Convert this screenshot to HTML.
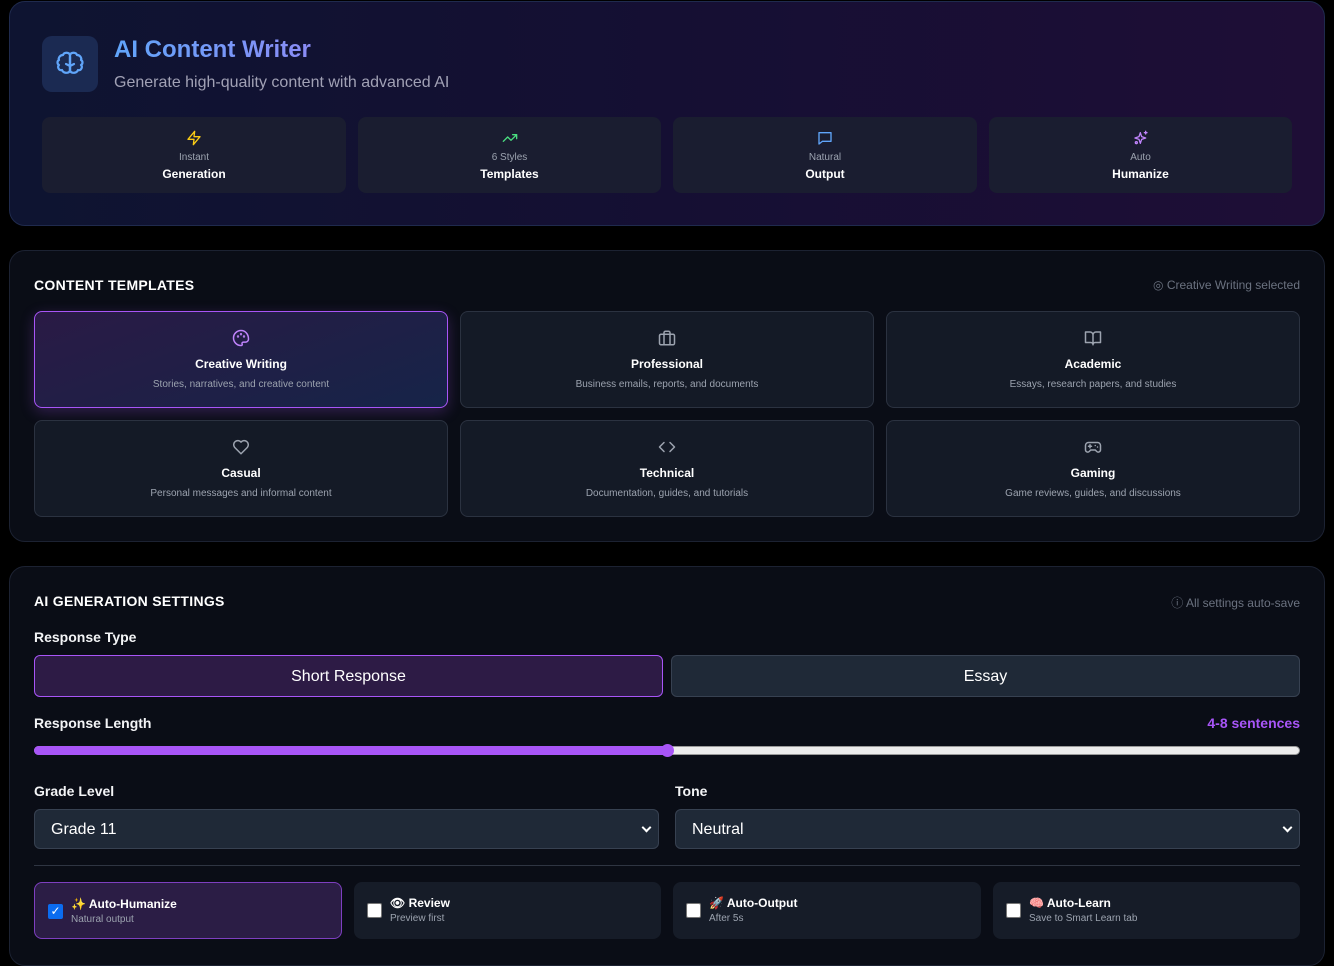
<!DOCTYPE html>
<html><head><meta charset="utf-8"><style>
*{box-sizing:border-box;margin:0;padding:0}
body{width:1334px;height:952px;overflow:hidden;background:#000;font-family:"Liberation Sans",sans-serif;color:#fff;position:relative}
.abs{position:absolute}
.card{position:absolute;border-radius:16px;border:1px solid #1e2538}
.hdr{left:9px;top:1px;width:1316px;height:225px;background:linear-gradient(90deg,#0e1431 0%,#150f33 50%,#1e0e36 100%);border-color:#1f2a4d}
.stat{position:absolute;top:117px;height:76px;background:#1a1d30;border-radius:8px;text-align:center}
.stat svg{display:block;margin:13px auto 0}
.stat .s{font-size:10px;color:#9ca3af;margin-top:6px}
.stat .b{font-size:12px;font-weight:bold;margin-top:4px}
.sec{background:#0a0d16;border-color:#1c2232}
.h{font-size:14px;font-weight:bold;letter-spacing:.3px}
.tile{position:absolute;width:414px;height:97px;background:#141a26;border:1px solid #2b3240;border-radius:8px;text-align:center}
.tile svg{display:block;margin:17px auto 0}
.tile .t{font-size:12px;font-weight:bold;margin-top:10px}
.tile .d{font-size:10px;color:#9ca3af;margin-top:8px}
.lbl{font-size:14px;font-weight:bold;color:#f3f4f6}
.btn{position:absolute;top:655px;height:42px;border-radius:6px;font-size:16px;text-align:center;line-height:42px}
.sel{position:absolute;top:809px;height:40px;background:#1f2937;border:1px solid #374151;border-radius:6px;font-size:16px;line-height:40px;padding-left:16px}
.sel:after{content:"";position:absolute;right:8px;top:14px;width:5px;height:5px;border-right:2px solid #fff;border-bottom:2px solid #fff;transform:rotate(45deg)}
.opt{position:absolute;top:882px;height:57px;border-radius:8px;background:#161c28}
.opt .cb{position:absolute;left:13px;top:21px;width:15px;height:15px;background:#fff;border-radius:2px;border:1px solid #777}
.opt .t{position:absolute;left:36px;top:14px;font-size:12px;font-weight:bold}
.opt .d{position:absolute;left:36px;top:31px;font-size:10px;color:#9ca3af}
</style></head><body>
<div class="card hdr"></div>
<div class="abs" style="left:42px;top:36px;width:56px;height:56px;border-radius:10px;background:#1b2a52">
<svg width="56" height="56" viewBox="0 0 56 56"><g fill="none" stroke="#60a5fa" stroke-width="2.2" stroke-linecap="round" stroke-linejoin="round"><path d="M28 19c-1-3-6-3-7 0-3 0-5 3-4 5-2 1-2 4 0 5-2 2 0 6 3 5 1 3 6 4 8 1z"/><path d="M28 19c1-3 6-3 7 0 3 0 5 3 4 5 2 1 2 4 0 5 2 2 0 6-3 5-1 3-6 4-8 1z"/><path d="M28 21v14M24 28l4 2 4-2"/></g></svg></div>
<div class="abs" style="left:114px;top:36px;font-size:24px;font-weight:bold;background:linear-gradient(90deg,#60a5fa,#8b8cf6);-webkit-background-clip:text;color:transparent">AI Content Writer</div>
<div class="abs" style="left:114px;top:74px;font-size:16px;color:#a1a1b5">Generate high-quality content with advanced AI</div>
<div class="stat" style="left:42px;width:304px"><svg width="16" height="16" viewBox="0 0 24 24" fill="none" stroke="#facc15" stroke-width="2" stroke-linejoin="round"><path d="M13 2L3 14h9l-1 8 10-12h-9z"/></svg><div class="s">Instant</div><div class="b">Generation</div></div>
<div class="stat" style="left:358px;width:303px"><svg width="16" height="16" viewBox="0 0 24 24" fill="none" stroke="#4ade80" stroke-width="2" stroke-linecap="round" stroke-linejoin="round"><path d="M22 7l-8.5 8.5-5-5L2 17M16 7h6v6"/></svg><div class="s">6 Styles</div><div class="b">Templates</div></div>
<div class="stat" style="left:673px;width:304px"><svg width="16" height="16" viewBox="0 0 24 24" fill="none" stroke="#60a5fa" stroke-width="2" stroke-linejoin="round"><path d="M3 4h18v13H8l-5 4z"/></svg><div class="s">Natural</div><div class="b">Output</div></div>
<div class="stat" style="left:989px;width:303px"><svg width="16" height="16" viewBox="0 0 24 24" fill="none" stroke="#c084fc" stroke-width="2" stroke-linecap="round" stroke-linejoin="round"><path d="M11 4l2 6 6 2-6 2-2 6-2-6-6-2 6-2zM19 2v4M17 4h4"/><circle cx="5" cy="19" r="1.5"/></svg><div class="s">Auto</div><div class="b">Humanize</div></div>

<div class="card sec" style="left:9px;top:250px;width:1316px;height:292px"></div>
<div class="abs h" style="left:34px;top:277px">CONTENT TEMPLATES</div>
<div class="abs" style="right:34px;top:278px;font-size:12px;color:#6b7280">◎ Creative Writing selected</div>
<div class="tile" style="left:34px;top:311px;background:linear-gradient(160deg,#2a1a45,#162448);border-color:#a855f7;box-shadow:0 4px 14px rgba(168,85,247,.25)"><svg width="18" height="18" viewBox="0 0 24 24" fill="none" stroke="#c084fc" stroke-width="2"><path d="M12 2a10 10 0 0 0 0 20c1.5 0 2-1 1.5-2-.6-1.3.3-2.5 1.7-2.5H18a4 4 0 0 0 4-4C22 6.5 17.5 2 12 2z"/><circle cx="8" cy="10" r=".6"/><circle cx="12" cy="7" r=".6"/><circle cx="16" cy="10" r=".6"/></svg><div class="t">Creative Writing</div><div class="d">Stories, narratives, and creative content</div></div>
<div class="tile" style="left:460px;top:311px"><svg width="18" height="18" viewBox="0 0 24 24" fill="none" stroke="#9ca3af" stroke-width="2"><rect x="2" y="7" width="20" height="14" rx="2"/><path d="M16 21V5a2 2 0 0 0-2-2h-4a2 2 0 0 0-2 2v16"/></svg><div class="t">Professional</div><div class="d">Business emails, reports, and documents</div></div>
<div class="tile" style="left:886px;top:311px"><svg width="18" height="18" viewBox="0 0 24 24" fill="none" stroke="#9ca3af" stroke-width="2" stroke-linejoin="round"><path d="M2 4h6a4 4 0 0 1 4 4v13a3 3 0 0 0-3-3H2zM22 4h-6a4 4 0 0 0-4 4v13a3 3 0 0 1 3-3h7z"/></svg><div class="t">Academic</div><div class="d">Essays, research papers, and studies</div></div>
<div class="tile" style="left:34px;top:420px"><svg width="18" height="18" viewBox="0 0 24 24" fill="none" stroke="#9ca3af" stroke-width="2" stroke-linejoin="round"><path d="M12 21l-8.5-8.5A5 5 0 0 1 12 5.5a5 5 0 0 1 8.5 7z"/></svg><div class="t">Casual</div><div class="d">Personal messages and informal content</div></div>
<div class="tile" style="left:460px;top:420px"><svg width="18" height="18" viewBox="0 0 24 24" fill="none" stroke="#9ca3af" stroke-width="2" stroke-linecap="round" stroke-linejoin="round"><path d="M8 6l-6 6 6 6M16 6l6 6-6 6"/></svg><div class="t">Technical</div><div class="d">Documentation, guides, and tutorials</div></div>
<div class="tile" style="left:886px;top:420px"><svg width="18" height="18" viewBox="0 0 24 24" fill="none" stroke="#9ca3af" stroke-width="2" stroke-linecap="round"><path d="M6 6h12a4 4 0 0 1 4 4v6a3 3 0 0 1-5 2l-2-2H9l-2 2a3 3 0 0 1-5-2v-6a4 4 0 0 1 4-4z"/><path d="M6 11h4M8 9v4M15 10h.01M18 12h.01"/></svg><div class="t">Gaming</div><div class="d">Game reviews, guides, and discussions</div></div>

<div class="card sec" style="left:9px;top:566px;width:1316px;height:400px"></div>
<div class="abs h" style="left:34px;top:593px">AI GENERATION SETTINGS</div>
<div class="abs" style="right:34px;top:594px;font-size:12px;color:#6b7280">ⓘ All settings auto-save</div>
<div class="abs lbl" style="left:34px;top:629px">Response Type</div>
<div class="btn" style="left:34px;width:629px;background:#2d1b45;border:1px solid #a855f7">Short Response</div>
<div class="btn" style="left:671px;width:629px;background:#1f2937;border:1px solid #374151">Essay</div>
<div class="abs lbl" style="left:34px;top:715px">Response Length</div>
<div class="abs" style="right:34px;top:715px;font-size:14px;font-weight:bold;color:#a855f7">4-8 sentences</div>
<div class="abs" style="left:34px;top:746px;width:1266px;height:9px;border-radius:5px;background:#ececec;border:1px solid #999"></div>
<div class="abs" style="left:34px;top:746px;width:634px;height:9px;border-radius:5px;background:#a855f7"></div>
<div class="abs" style="left:661px;top:744px;width:13px;height:13px;border-radius:50%;background:#a855f7"></div>
<div class="abs lbl" style="left:34px;top:783px">Grade Level</div>
<div class="abs lbl" style="left:675px;top:783px">Tone</div>
<div class="sel" style="left:34px;width:625px">Grade 11</div>
<div class="sel" style="left:675px;width:625px">Neutral</div>
<div class="abs" style="left:34px;top:865px;width:1266px;height:1px;background:#2f3542"></div>
<div class="opt" style="left:34px;width:308px;background:#2b1d45;border:1px solid #7e3fc0"><div class="cb" style="background:#0b6cf0;border-color:#0b6cf0;color:#fff;font-size:12px;line-height:13px;text-align:center">✓</div><div class="t">✨ Auto-Humanize</div><div class="d">Natural output</div></div>
<div class="opt" style="left:354px;width:307px"><div class="cb"></div><div class="t">👁 Review</div><div class="d">Preview first</div></div>
<div class="opt" style="left:673px;width:308px"><div class="cb"></div><div class="t">🚀 Auto-Output</div><div class="d">After 5s</div></div>
<div class="opt" style="left:993px;width:307px"><div class="cb"></div><div class="t">🧠 Auto-Learn</div><div class="d">Save to Smart Learn tab</div></div>
</body></html>
